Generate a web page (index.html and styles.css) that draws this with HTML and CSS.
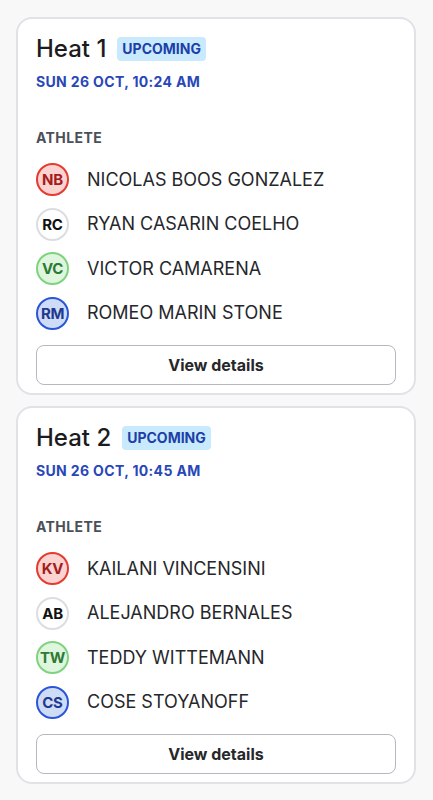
FILE: index.html
```html
<!DOCTYPE html>
<html lang="en">
  <head>
    <meta charset="UTF-8" />
    <meta name="viewport" content="width=device-width, initial-scale=1.0" />
    <title>Heats</title>
    <link rel="stylesheet" href="styles.css">
  </head>
  <body>
    <main class="heats">
      <!-- Heat 1 -->
      <section class="heat-card">
        <div class="heat-head">
          <h2 class="heat-title">Heat 1</h2>
          <span class="status-badge">Upcoming</span>
        </div>
        <p class="heat-time">Sun 26 Oct, 10:24 AM</p>
        <h3 class="col-label">Athlete</h3>
        <ul class="athletes">
          <li class="athlete">
            <span class="avatar avatar-red">NB</span>
            <span class="athlete-name">Nicolas Boos Gonzalez</span>
          </li>
          <li class="athlete">
            <span class="avatar avatar-white">RC</span>
            <span class="athlete-name">Ryan Casarin Coelho</span>
          </li>
          <li class="athlete">
            <span class="avatar avatar-green">VC</span>
            <span class="athlete-name">Victor Camarena</span>
          </li>
          <li class="athlete">
            <span class="avatar avatar-blue">RM</span>
            <span class="athlete-name">Romeo Marin Stone</span>
          </li>
        </ul>
        <button type="button" class="details-btn">View details</button>
      </section>

      <!-- Heat 2 -->
      <section class="heat-card">
        <div class="heat-head">
          <h2 class="heat-title">Heat 2</h2>
          <span class="status-badge">Upcoming</span>
        </div>
        <p class="heat-time">Sun 26 Oct, 10:45 AM</p>
        <h3 class="col-label">Athlete</h3>
        <ul class="athletes">
          <li class="athlete">
            <span class="avatar avatar-red">KV</span>
            <span class="athlete-name">Kailani Vincensini</span>
          </li>
          <li class="athlete">
            <span class="avatar avatar-white">AB</span>
            <span class="athlete-name">Alejandro Bernales</span>
          </li>
          <li class="athlete">
            <span class="avatar avatar-green">TW</span>
            <span class="athlete-name">Teddy Wittemann</span>
          </li>
          <li class="athlete">
            <span class="avatar avatar-blue">CS</span>
            <span class="athlete-name">Cose Stoyanoff</span>
          </li>
        </ul>
        <button type="button" class="details-btn">View details</button>
      </section>
    </main>
  </body>
</html>
```

FILE: styles.css
```css
/* Heat list cards */
body {
  margin: 0;
  font-family: Inter, "Noto Sans", sans-serif;
  background-color: #f8f8f8;
  color: #27272a;
}
.heats {
  display: flex;
  flex-direction: column;
  gap: 11px;
  padding: 17px 17px 0 16px;
}
.heat-card {
  background-color: #fff;
  border: 2px solid #e0e2e6;
  border-radius: 16px;
  padding: 14px 18px 8px;
}
.heat-head {
  display: flex;
  align-items: center;
  gap: 11px;
}
.heat-title {
  margin: 0;
  font-size: 24px;
  line-height: 32px;
  font-weight: 500;
  color: #1c1c1e;
}
.status-badge {
  background-color: #c8eafc;
  color: #1e3fa8;
  font-size: 14px;
  font-weight: 700;
  line-height: 24px;
  padding: 0 5px;
  border-radius: 4px;
  text-transform: uppercase;
}
.heat-time {
  margin: 7px 0 0;
  font-size: 14px;
  line-height: 20px;
  font-weight: 700;
  letter-spacing: 0.35px;
  color: #2847b8;
  text-transform: uppercase;
}
.col-label {
  margin: 36px 0 0;
  font-size: 14px;
  line-height: 20px;
  font-weight: 700;
  letter-spacing: 0.4px;
  color: #4b4f58;
  text-transform: uppercase;
}
.athletes {
  list-style: none;
  margin: 15px 0 0;
  padding: 0;
  display: flex;
  flex-direction: column;
  gap: 11.5px;
}
.athlete {
  display: flex;
  align-items: center;
  gap: 18px;
}
.avatar {
  box-sizing: border-box;
  width: 33px;
  height: 33px;
  border-radius: 50%;
  border: 2px solid;
  display: flex;
  align-items: center;
  justify-content: center;
  font-size: 15px;
  font-weight: 700;
  letter-spacing: -0.3px;
}
.avatar-red {
  background-color: #fbd3d1;
  border-color: #e53a2f;
  color: #a41c1c;
}
.avatar-white {
  background-color: #fff;
  border-color: #dcdde1;
  color: #111;
}
.avatar-green {
  background-color: #def5de;
  border-color: #7fd37f;
  color: #2d7a33;
}
.avatar-blue {
  background-color: #cfdcf8;
  border-color: #2a55d8;
  color: #1f3a8c;
}
.athlete-name {
  font-size: 18px;
  line-height: 24px;
  text-transform: uppercase;
  color: #26272b;
}
.details-btn {
  display: block;
  width: 100%;
  height: 40px;
  margin-top: 15.5px;
  background-color: #fff;
  border: 1px solid #b5b8bf;
  border-radius: 8px;
  font-family: inherit;
  font-size: 16px;
  font-weight: 700;
  color: #27272a;
  cursor: pointer;
}
```
